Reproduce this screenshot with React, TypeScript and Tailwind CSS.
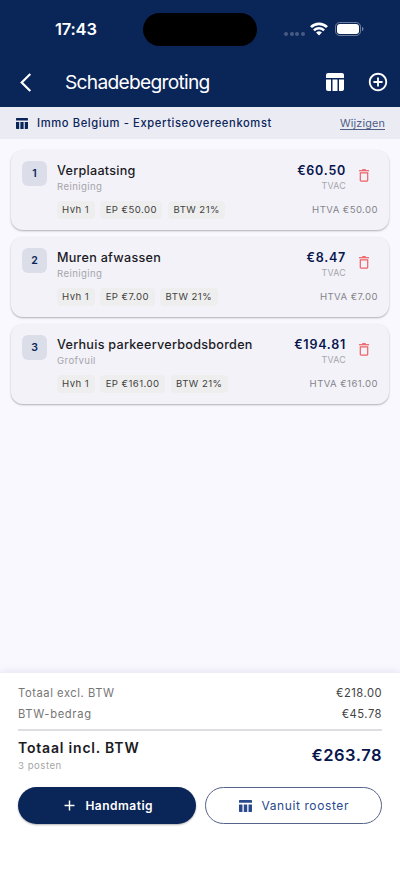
import type { ReactNode } from "react";
import { MdAdd, MdAddCircleOutline } from "react-icons/md";

type Post = {
  name: string;
  category: string;
  price: string;
  tax: string;
  total: string;
};

const posts: Post[] = [
  { name: "Verplaatsing", category: "Reiniging", price: "€50.00", tax: "21%", total: "€60.50" },
  { name: "Muren afwassen", category: "Reiniging", price: "€7.00", tax: "21%", total: "€8.47" },
  { name: "Verhuis parkeerverbodsborden", category: "Grofvuil", price: "€161.00", tax: "21%", total: "€194.81" },
];

/* ================= ICONS ================= */
function TableRoundedIcon({ className }: { className: string }) {
  return (
    <svg viewBox="0 0 18 18" className={className} fill="currentColor">
      <path d="M16 0H2C.9 0 0 .9 0 2v3h18V2c0-1.100-.9-2-2-2z" />
      <path d="M0 6.500h5V18H2c-1.100 0-2-.9-2-2zM6.500 6.500h5V18h-5zM13 6.500h5V16c0 1.100-.9 2-2 2h-3z" />
    </svg>
  );
}

function TableIcon({ className }: { className: string }) {
  return (
    <svg viewBox="0 0 12 11" className={className} fill="currentColor">
      <path d="M.7 0h10.600q.7 0 .7.700V2.600H0V.7Q0 0 .7 0zM0 4h3.200v7H.7q-.7 0-.7-.7zM4.400 4h3.200v7H4.400zM8.800 4H12v6.300q0 .7-.7.700H8.800z" />
    </svg>
  );
}

function TrashIcon() {
  return (
    <svg viewBox="0 0 10 13" className="mt-[8px] mr-[9px] ml-[13px] h-[13px] w-[10px] text-[#ee6064]" fill="none" stroke="currentColor">
      <path d="M0 1.700h10" strokeWidth="1.200" />
      <path d="M3.200.700h3.600" strokeWidth="1.200" />
      <path d="M1.300 3.800h7.400v7.400q0 1-1 1H2.300q-1 0-1-1z" strokeWidth="1.200" />
    </svg>
  );
}

/* ================= STATUS BAR ================= */
function StatusBar() {
  return (
    <div className="flex h-[59px] items-center">
      <span className="ml-[55px] w-[88px] text-[16.500px] font-semibold tracking-[-0.200px]">17:43</span>
      <div className="h-[33px] w-[114px] rounded-full bg-black" />
      <div className="mt-[8px] ml-[27px] flex gap-[1.500px]">
        {[0, 1, 2, 3].map((dot) => (
          <span key={dot} className="size-[4px] rounded-full bg-white/25" />
        ))}
      </div>
      <svg viewBox="0 0 18 14" className="mt-[-1px] ml-[5px] h-[14px] w-[18px]" fill="none" stroke="white">
        <path d="M1 5.100a11.500 11.500 0 0 1 16 0" strokeWidth="2.700" />
        <path d="M3.900 8.300a7.200 7.200 0 0 1 10.200 0" strokeWidth="2.400" />
        <path d="M6.100 10.600a4.100 4.100 0 0 1 5.800 0L9 13.500z" fill="white" stroke="none" />
      </svg>
      <svg viewBox="0 0 29 14" className="mt-[-1px] ml-[7px] h-[14px] w-[29px]">
        <rect x="0.500" y="0.500" width="25" height="13" rx="4.200" fill="none" stroke="white" strokeOpacity="0.400" />
        <rect x="2" y="2" width="22" height="10" rx="3" fill="white" />
        <path d="M27 4.800c2 .8 2 3.600 0 4.400z" fill="white" fillOpacity="0.450" />
      </svg>
    </div>
  );
}

/* ================= POST ================= */
function Chip({ children }: { children: ReactNode }) {
  return (
    <span className="flex h-[18px] items-center rounded-[4px] bg-[#eeeeee] px-[5.500px] pt-px text-[9.600px] tracking-[0.450px] text-[#424242]">
      {children}
    </span>
  );
}

function PostCard({ post, index }: { post: Post; index: number }) {
  return (
    <article className="h-[80px] rounded-[12px] bg-[#f3f2f9] px-[11px] pt-[11px] shadow-[0_1px_2px_rgba(0,0,0,0.300)]">
      <div className="flex">
        <div className="flex size-[25px] items-center justify-center rounded-[6px] bg-[#dbdde9] pt-px text-[10.500px] font-semibold text-[#0a2558]">
          {index + 1}
        </div>
        <div className="ml-[10px] flex-1 pt-px">
          <h2 className="text-[12.600px] leading-[18px] font-medium tracking-[0.270px] text-[#1b1b1f]">{post.name}</h2>
          <p className="text-[9.600px] leading-[14px] tracking-[0.400px] text-[#a5a5aa]">{post.category}</p>
        </div>
        <div className="pt-px text-right">
          <p className="text-[12.500px] leading-[18px] font-semibold tracking-[0.750px] text-[#08164d]">{post.total}</p>
          <p className="text-[8.800px] leading-[12px] tracking-[0.300px] text-[#a5a5aa]">TVAC</p>
        </div>
        <TrashIcon />
      </div>
      <div className="mt-[7px] ml-[34.500px] flex items-center gap-[5.500px]">
        <Chip>Hvh 1</Chip>
        <Chip>EP {post.price}</Chip>
        <Chip>BTW {post.tax}</Chip>
        <span className="ml-auto pt-px text-[9.600px] tracking-[0.420px] text-[#85858a]">HTVA {post.price}</span>
      </div>
    </article>
  );
}

export default function App() {
  return (
    <div className="flex h-[869px] w-[400px] flex-col overflow-hidden bg-[#f9f8ff] font-['Inter','Liberation_Sans',sans-serif]">
      {/* HEADER */}
      <header className="h-[107px] shrink-0 bg-[#0a2558] text-white">
        <StatusBar />
        <div className="flex h-[46px] items-center pl-[20px]">
          <svg viewBox="0 0 12 19" className="h-[19px] w-[12px]" fill="none" stroke="currentColor" strokeWidth="2.200">
            <path d="M10.300 1 1.700 9.500l8.600 8.500" />
          </svg>
          <h1 className="ml-[33px] text-[19.200px] tracking-[-0.720px]">Schadebegroting</h1>
          <div className="ml-auto flex items-center pr-[11px]">
            <TableRoundedIcon className="size-[18px]" />
            <MdAddCircleOutline className="ml-[23px] size-[22px]" />
          </div>
        </div>
      </header>

      {/* TEMPLATE */}
      <div className="flex h-[32px] shrink-0 items-center bg-[#ebebf4] px-[15px] pt-px text-[#0a2558]">
        <TableIcon className="ml-px h-[11px] w-[12px]" />
        <span className="ml-[9px] text-[11.200px] font-medium tracking-[0.610px]">Immo Belgium - Expertiseovereenkomst</span>
        <button className="ml-auto pt-px text-[10.800px] tracking-[0.150px] text-[#4d5e85] underline underline-offset-2">Wijzigen</button>
      </div>

      {/* POSTEN */}
      <main className="flex flex-1 flex-col gap-[7px] px-[11px] pt-[11px]">
        {posts.map((post, index) => (
          <PostCard key={post.name} post={post} index={index} />
        ))}
      </main>

      {/* TOTALEN */}
      <footer className="h-[196px] shrink-0 bg-white px-[18px] pt-[10px] shadow-[0_-2px_8px_rgba(30,30,80,0.080)]">
        <div className="flex h-[21px] items-center justify-between text-[11.200px] text-[#757575]">
          <span className="tracking-[0.560px]">Totaal excl. BTW</span>
          <span className="tracking-[0.500px] text-[#424242]">€218.00</span>
        </div>
        <div className="flex h-[21px] items-center justify-between text-[11.200px] text-[#757575]">
          <span className="tracking-[0.660px]">BTW-bedrag</span>
          <span className="tracking-[0.500px] text-[#424242]">€45.78</span>
        </div>
        <hr className="mt-[4px] border-t-2 border-[#dddde4]" />
        <div className="mt-[6px] flex h-[37px] items-center justify-between">
          <div>
            <p className="text-[14px] leading-[20px] font-semibold tracking-[0.800px] text-[#1b1b1f]">Totaal incl. BTW</p>
            <p className="text-[9.600px] leading-[15px] tracking-[0.520px] text-[#a5a5a5]">3 posten</p>
          </div>
          <p className="pb-px text-[16.500px] font-semibold tracking-[0.500px] text-[#08164d]">€263.78</p>
        </div>
        <div className="mt-[13px] grid grid-cols-2 gap-[9px]">
          <button className="flex h-[37px] items-center justify-center rounded-full bg-[#0a2558] pl-px text-[12px] font-semibold tracking-[0.500px] text-white shadow-[0_1px_2px_rgba(0,0,0,0.300)]">
            <MdAdd className="mr-[7px] size-[17px]" />
            Handmatig
          </button>
          <button className="flex h-[37px] items-center justify-center rounded-full border border-[#56638a] pl-[2px] text-[12px] tracking-[0.600px] text-[#294a8c]">
            <TableIcon className="mr-[9px] h-[12px] w-[13px]" />
            Vanuit rooster
          </button>
        </div>
      </footer>
    </div>
  );
}
